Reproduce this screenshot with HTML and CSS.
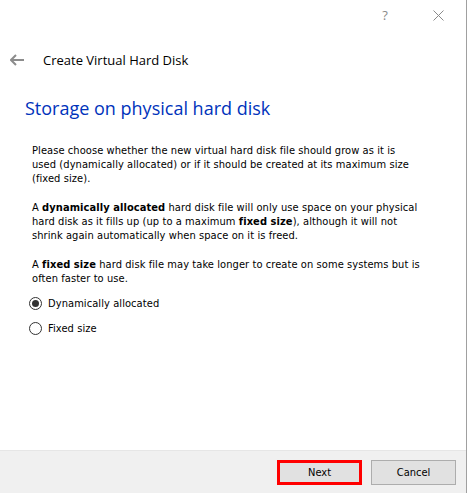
FILE: index.html
```html
<!DOCTYPE html>
<html>
<head>
<meta charset="utf-8">
<link rel="stylesheet" href="styles.css">
</head>
<body>
<div class="window">
  <div class="titlebar">
    <span class="help">?</span>
    <svg class="close" width="11" height="11" viewBox="0 0 11 11"><path d="M0.5 0.5L10.5 10.5M10.5 0.5L0.5 10.5" stroke="#8a8a8a" stroke-width="1" fill="none"/></svg>
  </div>
  <div class="header">
    <svg class="back" width="14" height="12" viewBox="0 0 14 12"><path d="M1 6H14M6 1L1 6L6 11" stroke="#8c8c8c" stroke-width="2" fill="none"/></svg>
    <span class="header-title">Create Virtual Hard Disk</span>
  </div>
  <div class="content">
    <h1 class="page-title">Storage on physical hard disk</h1>
    <p class="para">Please choose whether the new virtual hard disk file should grow as it is<br>used (dynamically allocated) or if it should be created at its maximum size<br>(fixed size).</p>
    <p class="para">A <b>dynamically allocated</b> hard disk file will only use space on your physical<br>hard disk as it fills up (up to a maximum <b>fixed size</b>), although it will not<br>shrink again automatically when space on it is freed.</p>
    <p class="para">A <b>fixed size</b> hard disk file may take longer to create on some systems but is<br>often faster to use.</p>
    <div class="options">
      <label class="option"><span class="radio checked"></span>Dynamically allocated</label>
      <label class="option"><span class="radio"></span>Fixed size</label>
    </div>
  </div>
  <div class="footer">
    <button class="btn btn-next">Next</button>
    <button class="btn">Cancel</button>
  </div>
</div>
</body>
</html>
```
FILE: styles.css
```css
html, body {
  margin: 0;
  padding: 0;
  background: #ffffff;
}
.window {
  width: 466px;
  height: 493px;
  border-right: 1px solid #a0a0a0;
  display: flex;
  flex-direction: column;
  font-family: "DejaVu Sans Condensed", "DejaVu Sans", sans-serif;
  font-stretch: condensed;
  font-size: 11px;
  letter-spacing: 0.08px;
  color: #000;
}
.titlebar {
  height: 30px;
  display: flex;
  justify-content: flex-end;
  align-items: center;
  gap: 45px;
  padding-right: 22px;
}
.help {
  font-family: "Open Sans", sans-serif;
  font-stretch: normal;
  font-size: 13px;
  color: #8a8a8a;
}
.close {
  display: block;
}
.header {
  height: 32px;
  margin-top: 14px;
  display: flex;
  align-items: center;
  padding-left: 10px;
}
.back {
  display: block;
  margin-right: 19px;
}
.header-title {
  font-family: "Open Sans", sans-serif;
  font-stretch: normal;
  font-size: 13px;
  letter-spacing: 0;
  color: #000;
}
.content {
  flex: 1;
  padding-left: 25px;
}
.page-title {
  margin: 19px 0 23px 0;
  font-family: "Open Sans", sans-serif;
  font-stretch: normal;
  font-weight: normal;
  font-size: 18px;
  letter-spacing: 0;
  line-height: 26px;
  color: #0033bb;
}
.para {
  margin: 0 0 15px 7px;
  line-height: 14px;
  white-space: nowrap;
}
.options {
  display: flex;
  flex-direction: column;
  gap: 12px;
  margin-top: -4px;
}
.option {
  display: flex;
  align-items: center;
  height: 13px;
  padding-left: 4px;
}
.radio {
  width: 13px;
  height: 13px;
  box-sizing: border-box;
  border: 1px solid #333333;
  border-radius: 50%;
  margin-right: 6px;
  display: flex;
  align-items: center;
  justify-content: center;
}
.radio.checked::after {
  content: "";
  width: 7px;
  height: 7px;
  border-radius: 50%;
  background: #333333;
}
.footer {
  height: 43px;
  background: #f0f0f0;
  border-top: 1px solid #e6e6e6;
  box-sizing: border-box;
  display: flex;
  justify-content: flex-end;
  align-items: flex-start;
  gap: 9px;
  padding: 9px 10px 0 0;
}
.btn {
  width: 85px;
  height: 25px;
  box-sizing: border-box;
  background: #e1e1e1;
  border: 1px solid #adadad;
  font-family: "DejaVu Sans Condensed", "DejaVu Sans", sans-serif;
  font-stretch: condensed;
  font-size: 11px;
  color: #000;
  padding: 0;
}
.btn-next {
  border: 3px solid #ff0000;
}
```
